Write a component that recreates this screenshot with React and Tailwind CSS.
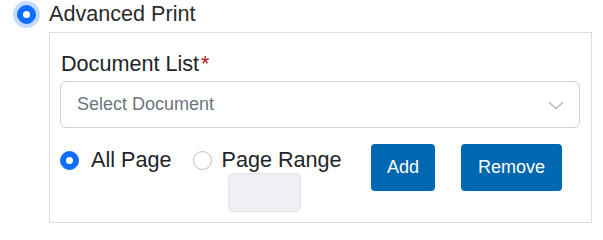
import React from "react";

function Radio({ checked, focused }) {
  return (
    <span
      className={`flex shrink-0 items-center justify-center w-[19px] h-[19px] rounded-full ${
        checked ? "bg-[#0d6efd] border border-[#0d6efd]" : "bg-white border border-[#b9bfc6]"
      } ${focused ? "shadow-[0_0_0_4px_rgba(13,110,253,0.25)]" : ""}`}
    >
      {checked && <span className="block w-[7px] h-[7px] rounded-full bg-white" />}
    </span>
  );
}

export default function App() {
  return (
    <div className="bg-white w-[603px] h-[233px] pt-[1px] pl-[17px] font-['Liberation_Sans',Arial,sans-serif] text-[#212529]">
      {/* Advanced print option */}
      <label className="flex items-center h-[26px] text-[21.6px] leading-[26px]">
        <Radio checked focused />
        <span className="ml-[13px] text-[#2b2b2b]">Advanced Print</span>
      </label>

      <div className="mt-[5px] ml-[32px] w-[543px] h-[191px] border border-[#dedede] pt-[18px] px-[10px]">
        <div className="h-[26px] text-[21.6px] leading-[26px] pl-[1px]">
          Document List<span className="text-[#c0141b] ml-[2px]">*</span>
        </div>

        {/* Select */}
        <div className="mt-[4px] w-[520px] h-[47px] border border-[#ced4da] rounded-[6px] flex items-center justify-between pl-[16px] pr-[15px]">
          <span className="text-[18px] text-[#6c757d]">Select Document</span>
          <svg width="16" height="9" viewBox="0 0 16 9" className="mt-[2px]">
            <path d="M1 1.2 L8 7.5 L15 1.2" fill="none" stroke="#b3b9c0" strokeWidth="1.4" />
          </svg>
        </div>

        {/* Page options + buttons */}
        <div className="mt-[16px] flex items-start">
          <label className="w-[132px] mt-[3px] flex items-center h-[26px] text-[21.6px] leading-[26px]">
            <Radio checked />
            <span className="ml-[12px]">All Page</span>
          </label>

          <div className="w-[179px] mt-[3px] flex flex-col">
            <label className="flex items-center h-[26px] text-[21.6px] leading-[26px] pl-[0.5px]">
              <Radio />
              <span className="ml-[10px]">Page Range</span>
            </label>
            <input
              disabled
              className="ml-[36px] w-[73px] h-[39px] rounded-[5px] bg-[#eef0f3] border border-[#dfe2e6]"
            />
          </div>

          <button className="w-[64px] h-[47px] rounded-[4px] bg-[#0067b1] text-white text-[18px]">
            Add
          </button>
          <button className="ml-[26px] w-[101px] h-[47px] rounded-[4px] bg-[#0067b1] text-white text-[18px]">
            Remove
          </button>
        </div>
      </div>
    </div>
  );
}
